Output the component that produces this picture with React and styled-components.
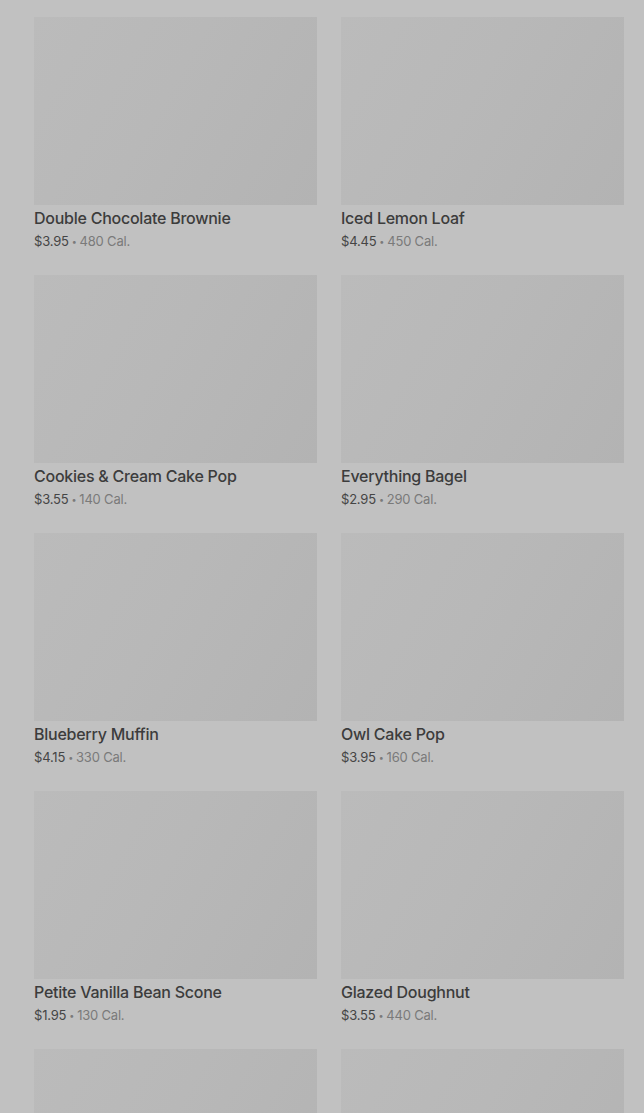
import React from "react";
import styled, { createGlobalStyle } from "styled-components";

const GlobalStyle = createGlobalStyle`
  html, body {
    margin: 0;
    padding: 0;
    background: #c1c1c1;
  }
  body {
    font-family: Inter, "Noto Sans", sans-serif;
    overflow: hidden;
  }
`;

const Page = styled.div`
  background: #c1c1c1;
  height: 1113px;
  overflow: hidden;
  padding: 17px 20px 0 34px;
`;

const Grid = styled.div`
  display: grid;
  grid-template-columns: 283px 283px;
  column-gap: 24px;
  row-gap: 26px;
`;

const Card = styled.div`
  display: flex;
  flex-direction: column;
`;

const Thumb = styled.div`
  height: 188px;
  background: linear-gradient(120deg, #bbbbbb 0%, #b8b8b8 45%, #b3b3b3 100%);
`;

const Name = styled.div`
  margin-top: 3px;
  font-size: 16px;
  font-weight: 500;
  line-height: 20px;
  color: #3c3c3c;
  letter-spacing: -0.25px;
`;

const Meta = styled.div`
  margin-top: 5px;
  height: 16px;
  font-size: 13px;
  line-height: 16px;
  color: #7a7a7a;
  letter-spacing: -0.2px;
`;

const Price = styled.span`
  color: #454545;
`;

const Dot = styled.span`
  font-size: 9px;
  line-height: 0;
  margin: 0 3px;
  vertical-align: 1px;
`;

const items = [
  ["Double Chocolate Brownie", "$3.95", "480"],
  ["Iced Lemon Loaf", "$4.45", "450"],
  ["Cookies & Cream Cake Pop", "$3.55", "140"],
  ["Everything Bagel", "$2.95", "290"],
  ["Blueberry Muffin", "$4.15", "330"],
  ["Owl Cake Pop", "$3.95", "160"],
  ["Petite Vanilla Bean Scone", "$1.95", "130"],
  ["Glazed Doughnut", "$3.55", "440"],
  ["", "", ""],
  ["", "", ""],
];

export default function App() {
  return (
    <>
      <GlobalStyle />
      <Page>
        <Grid>
          {items.map(([name, price, cal], i) => (
            <Card key={i}>
              <Thumb />
              {name && <Name>{name}</Name>}
              {name && (
                <Meta>
                  <Price>{price}</Price>
                  <Dot>•</Dot>
                  {cal} Cal.
                </Meta>
              )}
            </Card>
          ))}
        </Grid>
      </Page>
    </>
  );
}
